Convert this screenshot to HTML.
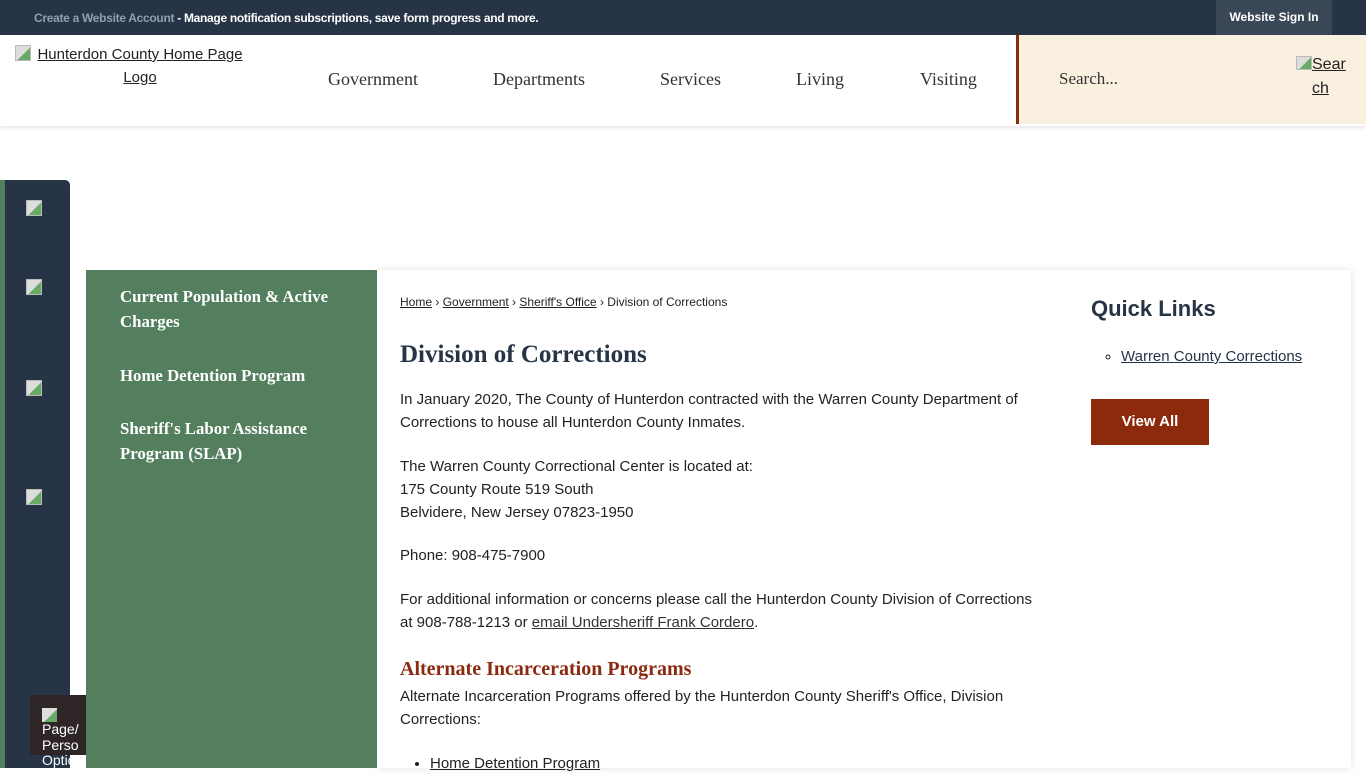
<!DOCTYPE html>
<html><head><meta charset="utf-8"><style>
*{margin:0;padding:0;box-sizing:border-box}
body{width:1366px;height:768px;overflow:hidden;background:#fff;font-family:"Liberation Sans",sans-serif;position:relative;color:#222}
.abs{position:absolute}
a{color:#222}
.top{left:0;top:0;width:1366px;height:35px;background:#263445}
.nav{font-family:"Liberation Serif",serif;font-size:18px;color:#333;top:69px}
.img{width:16px;height:16px;border:1px solid #bbb;background:linear-gradient(135deg,#ddd 55%,#6a6 56%)}
.side a{font-family:"Liberation Serif",serif;font-weight:bold;color:#fff;text-decoration:none;font-size:16.8px;line-height:25px}
.t{position:absolute;left:400px;width:648px;font-size:15px;line-height:23px;color:#222}
</style></head><body>
<div class="abs top"></div>
<div class="abs" style="left:34px;top:11px;font-size:12px;font-weight:bold;color:#fff;letter-spacing:-.3px"><span style="color:#8fa0b5">Create a Website Account</span> - Manage notification subscriptions, save form progress and more.</div>
<div class="abs" style="left:1216px;top:0;width:116px;height:35px;background:#3a4757;color:#fff;font-size:12px;font-weight:bold;text-align:center;line-height:35px">Website Sign In</div>
<div class="abs" style="left:0;top:35px;width:1366px;height:91px;box-shadow:0 2px 4px rgba(0,0,0,.1)"></div>
<div class="abs img" style="left:15px;top:45px"></div>
<div class="abs" style="left:25px;top:43px;width:230px;text-align:center;font-size:15px;line-height:23px"><a href="#">Hunterdon County Home Page Logo</a></div>
<div class="abs nav" style="left:328px">Government</div>
<div class="abs nav" style="left:493px">Departments</div>
<div class="abs nav" style="left:660px">Services</div>
<div class="abs nav" style="left:796px">Living</div>
<div class="abs nav" style="left:920px">Visiting</div>
<div class="abs" style="left:1016px;top:35px;width:350px;height:89px;background:#faf0e0;border-left:3px solid #8a2a10"></div>
<div class="abs" style="left:1059px;top:69px;font-family:'Liberation Serif',serif;font-size:17px;color:#333">Search...</div>
<div class="abs img" style="left:1296px;top:56px;width:16px;height:14px"></div>
<div class="abs" style="left:1312px;top:53px;width:36px;font-size:16px;line-height:24px"><a href="#">Sear ch</a></div>

<div class="abs" style="left:0;top:180px;width:70px;height:588px;background:#263445;border-radius:0 5px 0 0;border-left:5px solid #537f5e"></div>
<div class="abs img" style="left:26px;top:200px"></div>
<div class="abs img" style="left:26px;top:279px"></div>
<div class="abs img" style="left:26px;top:380px"></div>
<div class="abs img" style="left:26px;top:489px"></div>
<div class="abs" style="left:30px;top:695px;width:60px;height:60px;background:#2d2526;border-radius:3px"></div>
<div class="abs" style="left:42px;top:708px;width:38px;height:60px;overflow:hidden;color:#fff;font-size:14px;line-height:15.5px"><div class="img" style="width:15px;height:14px;border:none"></div>Page/ Perso Optio</div>

<div class="abs" style="left:377px;top:270px;width:974px;height:498px;box-shadow:0 0 8px rgba(0,0,0,.12);background:#fff"></div>
<div class="abs side" style="left:86px;top:270px;width:291px;height:498px;background:#537f5e;padding:14px 34px">
<a href="#" style="display:block;margin-bottom:29px">Current Population &amp; Active Charges</a>
<a href="#" style="display:block;margin-bottom:28px">Home Detention Program</a>
<a href="#" style="display:block">Sheriff's Labor Assistance Program (SLAP)</a>
</div>
<div class="abs" style="left:400px;top:295px;font-size:12px;color:#222"><a href="#">Home</a> › <a href="#">Government</a> › <a href="#">Sheriff's Office</a> › Division of Corrections</div>
<div class="abs" style="left:400px;top:341px;font-family:'Liberation Serif',serif;font-weight:bold;font-size:25px;color:#263445">Division of Corrections</div>
<div class="t" style="top:388px">In January 2020, The County of Hunterdon contracted with the Warren County Department of Corrections to house all Hunterdon County Inmates.</div>
<div class="t" style="top:455px">The Warren County Correctional Center is located at:<br>175 County Route 519 South<br>Belvidere, New Jersey 07823-1950</div>
<div class="t" style="top:544px">Phone: 908-475-7900</div>
<div class="t" style="top:588px;width:645px">For additional information or concerns please call the Hunterdon County Division of Corrections at 908-788-1213 or <a href="#" style="color:#333">email Undersheriff Frank Cordero</a>.</div>
<div class="abs" style="left:400px;top:658px;font-family:'Liberation Serif',serif;font-weight:bold;font-size:20px;color:#8a2a10">Alternate Incarceration Programs</div>
<div class="t" style="top:685px;width:620px">Alternate Incarceration Programs offered by the Hunterdon County Sheriff's Office, Division Corrections:</div>
<ul class="abs" style="left:430px;top:752px;font-size:15px;line-height:23px"><li><a href="#">Home Detention Program</a></li></ul>
<div class="abs" style="left:1091px;top:296px;font-size:22px;font-weight:bold;color:#263445">Quick Links</div>
<ul class="abs" style="left:1121px;top:346px;font-size:15px;list-style:circle;line-height:22px"><li><a href="#" style="color:#263445">Warren County Corrections</a></li></ul>
<div class="abs" style="left:1091px;top:399px;width:118px;height:46px;background:#8d2a0b;color:#fff;font-weight:bold;font-size:15px;text-align:center;line-height:46px">View All</div>
</body></html>
